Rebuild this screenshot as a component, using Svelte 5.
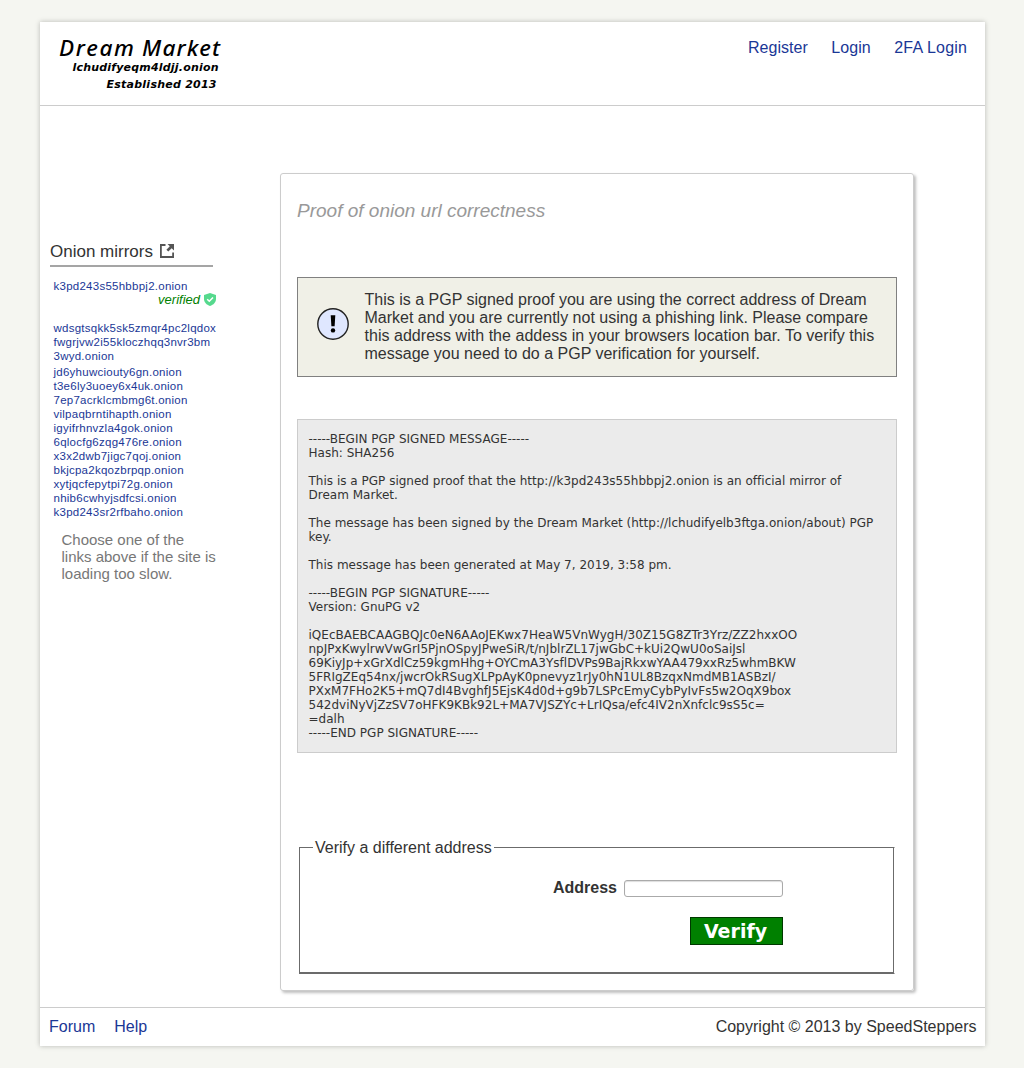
<script>
  const mirrors = [
    'jd6yhuwciouty6gn.onion', 't3e6ly3uoey6x4uk.onion', '7ep7acrklcmbmg6t.onion',
    'vilpaqbrntihapth.onion', 'igyifrhnvzla4gok.onion', '6qlocfg6zqg476re.onion',
    'x3x2dwb7jigc7qoj.onion', 'bkjcpa2kqozbrpqp.onion', 'xytjqcfepytpi72g.onion',
    'nhib6cwhyjsdfcsi.onion', 'k3pd243sr2rfbaho.onion'
  ];

  const message = `-----BEGIN PGP SIGNED MESSAGE-----
Hash: SHA256

This is a PGP signed proof that the http://k3pd243s55hbbpj2.onion is an official mirror of
Dream Market.

The message has been signed by the Dream Market (http://lchudifyelb3ftga.onion/about) PGP
key.

This message has been generated at May 7, 2019, 3:58 pm.

-----BEGIN PGP SIGNATURE-----
Version: GnuPG v2

iQEcBAEBCAAGBQJc0eN6AAoJEKwx7HeaW5VnWygH/30Z15G8ZTr3Yrz/ZZ2hxxOO
npJPxKwylrwVwGrI5PjnOSpyJPweSiR/t/nJblrZL17jwGbC+kUi2QwU0oSaiJsl
69KiyJp+xGrXdlCz59kgmHhg+OYCmA3YsflDVPs9BajRkxwYAA479xxRz5whmBKW
5FRIgZEq54nx/jwcrOkRSugXLPpAyK0pnevyz1rJy0hN1UL8BzqxNmdMB1ASBzI/
PXxM7FHo2K5+mQ7dI4BvghfJ5EjsK4d0d+g9b7LSPcEmyCybPyIvFs5w2OqX9box
542dviNyVjZzSV7oHFK9KBk92L+MA7VJSZYc+LrIQsa/efc4IV2nXnfclc9sS5c=
=dalh
-----END PGP SIGNATURE-----`;
</script>

<div class="page">
  <header>
    <svg class="logo" width="170" height="60" viewBox="0 0 170 60">
      <text class="brand" x="4" y="24" textLength="75" lengthAdjust="spacing">Dream</text>
      <text class="brand" x="87" y="24" textLength="78" lengthAdjust="spacing">Market</text>
      <text class="sub" x="17.5" y="39" textLength="146" lengthAdjust="spacing">lchudifyeqm4ldjj.onion</text>
      <text class="sub" x="51.5" y="56" textLength="110" lengthAdjust="spacing">Established 2013</text>
    </svg>
    <nav><a href="#register">Register</a><a href="#login">Login</a><a href="#2fa">2FA Login</a></nav>
  </header>

  <div class="body">
    <aside>
      <h2>Onion mirrors
        <svg width="14" height="14" viewBox="0 0 14 14">
          <path d="M5.500 1H.9v12h12.200V8.500" fill="none" stroke="#555" stroke-width="1.800" />
          <path d="M7.500 0H14v6.500l-2.300-2.300L8.300 7.600 6.400 5.700l3.400-3.400z" fill="#555" />
        </svg>
      </h2>
      <div class="mirrors">
        <a href="#m">k3pd243s55hbbpj2.onion</a>
        <div class="verified">verified
          <svg width="12" height="13" viewBox="0 0 12 13">
            <path d="M6 0l6 2v4c0 3.3-2.500 5.800-6 7C2.500 11.800 0 9.300 0 6V2z" fill="#55d98d" />
            <path d="M3.200 6.300l2.100 2 3.700-3.900" fill="none" stroke="#fff" stroke-width="1.500" />
          </svg>
        </div>
        <a href="#m" class="long">wdsgtsqkk5sk5zmqr4pc2lqdox<br />fwgrjvw2i55kloczhqq3nvr3bm<br />3wyd.onion</a>
        {#each mirrors as m}<a href="#m">{m}</a>{/each}
      </div>
      <p>Choose one of the<br />links above if the site is<br />loading too slow.</p>
    </aside>

    <main>
      <h1>Proof of onion url correctness</h1>
      <div class="notice">
        <svg width="32" height="32" viewBox="0 0 32 32">
          <circle cx="16" cy="16" r="15.200" fill="#dfe7ff" stroke="#222" stroke-width="1.400" />
          <path d="M13.700 7.300h4.600l-.7 11h-3.200z" fill="#000" />
          <circle cx="16" cy="22.400" r="2.200" fill="#000" />
        </svg>
        <p>This is a PGP signed proof you are using the correct address of Dream<br />Market and you are currently not using a phishing link. Please compare<br /><span class="wide">this address with the addess in your browsers location bar. To verify this</span><br />message you need to do a PGP verification for yourself.</p>
      </div>
      <pre>{message}</pre>
      <fieldset>
        <legend>Verify a different address</legend>
        <div class="form">
          <div class="row"><label for="address">Address</label><input id="address" type="text" /></div>
          <button type="button">Verify</button>
        </div>
      </fieldset>
    </main>
  </div>

  <footer>
    <div class="links"><a href="#forum">Forum</a><a href="#help">Help</a></div>
    <span>Copyright © 2013 by SpeedSteppers</span>
  </footer>
</div>

<style>
  :global(body) { background: #f5f6f1; }
  .page {
    box-sizing: border-box; width: 945px; height: 1024px; margin: 22px 0 22px 40px;
    display: flex; flex-direction: column; background: #fff;
    box-shadow: 0 0 5px rgba(0, 0, 0, .25);
    font: 16px/18px "Liberation Sans", Arial, sans-serif; color: #333;
  }
  a { color: #1a3796; text-decoration: none; }
  header {
    box-sizing: border-box; height: 84px; border-bottom: 1px solid #ccc;
    display: flex; justify-content: space-between; padding: 10px 18px 0 15px;
  }
  .logo text { fill: #000; font-style: italic; }
  .logo .brand { font-family: "Noto Sans", sans-serif; font-size: 22.500px; font-weight: 500; }
  .logo .sub { font-family: "DejaVu Sans", sans-serif; font-size: 11px; font-weight: 700; }
  nav { display: flex; gap: 23.500px; padding-top: 7px; letter-spacing: .04px; }
  nav a:last-child { letter-spacing: .2px; margin-right: -.2px; }
  .body { flex: 1; display: flex; align-items: flex-start; }
  aside { width: 240px; padding-top: 136px; }
  h2 {
    display: flex; align-items: center; gap: 7px; box-sizing: border-box;
    width: 163px; height: 25px; margin: 0 0 12px 10px; padding: 2px 0 5px;
    border-bottom: 2px solid #a5a5a5; font-size: 17px; font-weight: 400;
  }
  h2 svg { margin-top: -2px; }
  .mirrors {
    width: 163px; margin-left: 13.500px; font-size: 11.500px; line-height: 14px;
    letter-spacing: .255px;
  }
  .mirrors a { display: block; white-space: nowrap; }
  .mirrors .long { margin: 14px 0 2px; }
  .verified {
    display: flex; justify-content: flex-end; align-items: center; gap: 4px; letter-spacing: 0;
    height: 14px; padding-right: .5px; color: #008000; font-size: 13px; line-height: 16px; font-style: italic;
  }
  .verified svg { margin-top: -1px; }
  aside p { margin: 12px 0 0 21.500px; color: #777; font-size: 15px; line-height: 17px; }
  main {
    box-sizing: border-box; width: 634px; height: 818px; margin-top: 67px; padding: 0 16px;
    border: 1px solid #ccc; border-radius: 3px; box-shadow: 2px 2px 3px rgba(0, 0, 0, .25);
  }
  h1 {
    margin: 25px 0 55px; color: #999; font-size: 19px; line-height: 23px;
    font-weight: 400; font-style: italic;
  }
  .notice {
    box-sizing: border-box; width: 600px; height: 100px; padding: 0 19px; gap: 15.500px;
    display: flex; align-items: center; background: #f0f0e7; border: 1px solid #808080;
  }
  .notice svg { flex: none; margin-top: -6px; }
  .notice p { margin: 0; white-space: nowrap; }
  .wide { letter-spacing: .03px; }
  pre {
    box-sizing: border-box; width: 600px; height: 334px; margin: 42px 0 0; padding: 12px 10.500px;
    background: #ebebeb; border: 1px solid #ccc; font: 12px/14px "DejaVu Sans", sans-serif;
    letter-spacing: .01px;
  }
  fieldset {
    box-sizing: border-box; width: 596px; height: 136px; margin: 85px 0 0 2px; padding: 0 111px 0 13px;
    border: 1px solid #6b6b6b; border-right-color: #fff; box-shadow: inset -1px -1px 0 #6b6b6b;
  }
  legend { padding: 1px 2px 0; line-height: 18px; }
  .form { display: flex; flex-direction: column; align-items: flex-end; gap: 20px; padding-top: 23px; }
  .row { display: flex; align-items: center; gap: 7px; height: 17px; }
  label { font-weight: 700; line-height: 16px; margin-top: -2px; }
  input {
    box-sizing: border-box; width: 159px; height: 17px; margin: 0; padding: 0 4px;
    border: 1px solid #aaa; border-radius: 3px; box-shadow: inset 0 1px 1px #ddd; background: #fff;
  }
  button {
    box-sizing: border-box; width: 93px; height: 28px; padding: 0 2px 0 0; border: 1px solid #003800;
    background: #008000; color: #fff; font: 700 19px/24px "DejaVu Sans", sans-serif;
  }
  footer {
    box-sizing: border-box; height: 39px; border-top: 1px solid #ccc; padding: 0 8.500px 0 9px;
    display: flex; justify-content: space-between; align-items: center;
  }
  .links { display: flex; gap: 19px; }
</style>
